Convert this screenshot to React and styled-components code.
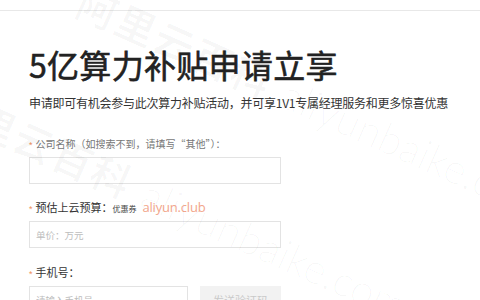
import styled, { createGlobalStyle } from "styled-components";

const GlobalStyle = createGlobalStyle`
  html, body {
    margin: 0;
    padding: 0;
    background: #fff;
  }
  body {
    font-family: "Noto Sans CJK SC", "Noto Sans", sans-serif;
    color: #333;
  }
`;

const Page = styled.div`
  position: relative;
  width: 480px;
  height: 300px;
  overflow: hidden;
  background: #fff;
`;

const TopBar = styled.div`
  height: 10px;
  border-bottom: 1px solid #e8e8e8;
`;

const Content = styled.div`
  display: flex;
  flex-direction: column;
  padding: 0 0 0 29px;
`;

const Title = styled.h1`
  margin: 33px 0 0;
  font-size: 32px;
  line-height: 40px;
  font-weight: 400;
  -webkit-text-stroke: 0.6px #222;
  color: #222;
  letter-spacing: 0.3px;
`;

const Subtitle = styled.p`
  margin: 10px 0 0;
  font-size: 12px;
  line-height: 18px;
  color: #333;
  letter-spacing: -0.25px;
`;

const Field = styled.div`
  display: flex;
  flex-direction: column;
  width: 252px;
  margin-top: ${(p) => p.$gap}px;
`;

const Label = styled.div`
  display: flex;
  align-items: baseline;
  height: ${(p) => (p.$small ? 14 : 16)}px;
  line-height: ${(p) => (p.$small ? 14 : 16)}px;
  font-size: ${(p) => (p.$small ? 10 : 11)}px;
  color: ${(p) => (p.$small ? "#777" : "#333")};
  margin-bottom: 6px;
  white-space: nowrap;
`;

const Star = styled.span`
  color: #f0905a;
  font-size: 9px;
  margin-right: 3px;
  font-family: "Liberation Sans", sans-serif;
`;

const Coupon = styled.span`
  font-size: 8px;
  color: #444;
  margin-right: 6px;
`;

const Promo = styled.span`
  font-family: "Open Sans", "Liberation Sans", sans-serif;
  font-size: 13px;
  color: #f2a68c;
  letter-spacing: -0.2px;
`;

const InputRow = styled.div`
  display: flex;
  gap: 12px;
`;

const Input = styled.input`
  box-sizing: border-box;
  width: ${(p) => p.$width || 252}px;
  height: 27px;
  padding: 0 6px;
  border: 1px solid #e3e3e3;
  outline: none;
  font-family: inherit;
  font-size: 9.5px;
  color: #333;
  background: #fff;
  &::placeholder {
    color: #bdbdbd;
  }
`;

const CodeButton = styled.button`
  width: 81px;
  height: 27px;
  border: none;
  background: #f2f2f2;
  color: #c9c9c9;
  font-family: inherit;
  font-size: 11px;
  padding: 0;
`;

const Watermark = styled.div`
  position: absolute;
  left: ${(p) => p.$x}px;
  top: ${(p) => p.$y}px;
  transform: rotate(24deg);
  transform-origin: left center;
  white-space: nowrap;
  pointer-events: none;
  color: rgba(0, 0, 0, 0.028);
  display: flex;
  align-items: baseline;
  gap: 14px;
`;

const MarkCn = styled.span`
  font-size: 40px;
  font-weight: 700;
  letter-spacing: 2px;
`;

const MarkEn = styled.span`
  font-family: "Lato", "Open Sans", sans-serif;
  font-size: 42px;
  font-weight: 300;
`;

export default function App() {
  return (
    <>
      <GlobalStyle />
      <Page>
        <TopBar />
        <Content>
          <Title>5亿算力补贴申请立享</Title>
          <Subtitle>申请即可有机会参与此次算力补贴活动，并可享1V1专属经理服务和更多惊喜优惠</Subtitle>

          <Field $gap={25}>
            <Label $small>
              <Star>*</Star>公司名称（如搜索不到，请填写“其他”）：
            </Label>
            <Input />
          </Field>

          <Field $gap={15}>
            <Label>
              <Star>*</Star>预估上云预算：<Coupon>优惠券</Coupon>
              <Promo>aliyun.club</Promo>
            </Label>
            <Input placeholder="单价：万元" />
          </Field>

          <Field $gap={16}>
            <Label>
              <Star>*</Star>手机号：
            </Label>
            <InputRow>
              <Input $width={159} placeholder="请输入手机号" />
              <CodeButton>发送验证码</CodeButton>
            </InputRow>
          </Field>
        </Content>

        <Watermark $x={80} $y={-30}>
          <MarkCn>阿里云百科</MarkCn>
          <MarkEn>aliyunbaike.com</MarkEn>
        </Watermark>
        <Watermark $x={-60} $y={70}>
          <MarkCn>阿里云百科</MarkCn>
          <MarkEn>aliyunbaike.com</MarkEn>
        </Watermark>
      </Page>
    </>
  );
}
